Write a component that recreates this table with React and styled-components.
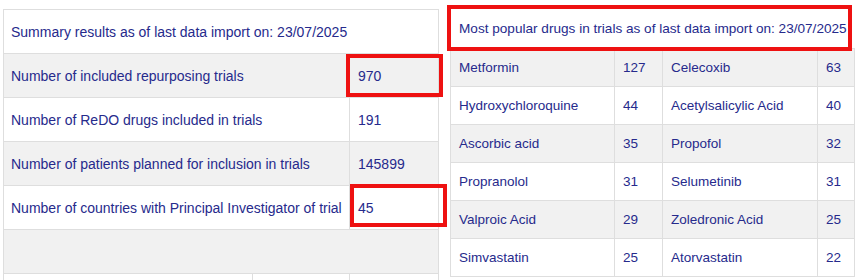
import React from 'react';
import styled, { createGlobalStyle } from 'styled-components';

const GlobalStyle = createGlobalStyle`
  body {
    margin: 0;
    background: #ffffff;
    font-family: "Liberation Sans", Arial, sans-serif;
  }
`;

const summary = [
  { label: 'Number of included repurposing trials', value: '970', mark: 'first' },
  { label: 'Number of ReDO drugs included in trials', value: '191' },
  { label: 'Number of patients planned for inclusion in trials', value: '145899' },
  { label: 'Number of countries with Principal Investigator of trial', value: '45', mark: 'second' },
];

const drugs = [
  ['Metformin', 127, 'Celecoxib', 63],
  ['Hydroxychloroquine', 44, 'Acetylsalicylic Acid', 40],
  ['Ascorbic acid', 35, 'Propofol', 32],
  ['Propranolol', 31, 'Selumetinib', 31],
  ['Valproic Acid', 29, 'Zoledronic Acid', 25],
  ['Simvastatin', 25, 'Atorvastatin', 22],
];

const App = () => (
  <>
    <GlobalStyle />
    <Page>
      <SummaryTable>
        <colgroup>
          <col style={{ width: 249 }} />
          <col style={{ width: 97 }} />
          <col />
        </colgroup>
        <tbody>
          <SummaryRow>
            <SummaryCell colSpan={3}>Summary results as of last data import on: 23/07/2025</SummaryCell>
          </SummaryRow>
          {summary.map((row, i) => (
            <SummaryRow key={row.label} shaded={i % 2 === 0}>
              <SummaryCell colSpan={2}>{row.label}</SummaryCell>
              <ValueCell>
                {row.value}
                {row.mark && <Highlight variant={row.mark} />}
              </ValueCell>
            </SummaryRow>
          ))}
          <SummaryRow shaded>
            <SummaryCell colSpan={3} />
          </SummaryRow>
          <SummaryRow>
            <TailCell />
            <TailCell />
            <TailCell />
          </SummaryRow>
        </tbody>
      </SummaryTable>

      <DrugPanel>
        <DrugCaption>Most popular drugs in trials as of last data import on: 23/07/2025</DrugCaption>
        <DrugTable>
          <colgroup>
            <col style={{ width: 164 }} />
            <col style={{ width: 48 }} />
            <col style={{ width: 155 }} />
            <col />
          </colgroup>
          <tbody>
            {drugs.map((d, i) => (
              <DrugRow key={d[0]} shaded={i % 2 === 0}>
                <DrugCell>{d[0]}</DrugCell>
                <DrugCell>{d[1]}</DrugCell>
                <DrugCell>{d[2]}</DrugCell>
                <DrugCell>{d[3]}</DrugCell>
              </DrugRow>
            ))}
          </tbody>
        </DrugTable>
      </DrugPanel>
    </Page>
  </>
);

const Page = styled.div`
  display: flex;
  align-items: flex-start;
  height: 280px;
  overflow: hidden;
`;

const SummaryTable = styled.table`
  margin: 9px 0 0 3px;
  width: 436px;
  border-collapse: collapse;
  table-layout: fixed;
  border: 1px solid #dedede;
  color: #262a8c;
  font-size: 14px;
`;

const SummaryRow = styled.tr.withConfig({ shouldForwardProp: p => p !== 'shaded' })`
  height: 44px;
  background: ${props => (props.shaded ? '#f1f1f1' : '#ffffff')};
`;

const SummaryCell = styled.td`
  padding: 0 8px 0 7px;
  border-top: 1px solid #dedede;
  border-bottom: 1px solid #dedede;
  white-space: nowrap;
  overflow: hidden;
`;

const ValueCell = styled.td`
  position: relative;
  padding: 0 8px;
  border: 1px solid #dedede;
`;

const TailCell = styled.td`
  border: 1px solid #dedede;
`;

const Highlight = styled.span`
  position: absolute;
  border: 4px solid #ee1111;
  pointer-events: none;
  left: ${props => (props.variant === 'first' ? '-4px' : '0px')};
  right: ${props => (props.variant === 'first' ? '-5px' : '-9px')};
  top: ${props => (props.variant === 'first' ? '0px' : '-2px')};
  bottom: ${props => (props.variant === 'first' ? '0px' : '2px')};
`;

const DrugPanel = styled.div`
  margin: 5px 0 0 8px;
  display: flex;
  flex-direction: column;
`;

const DrugCaption = styled.div`
  position: relative;
  z-index: 1;
  width: 405px;
  box-sizing: border-box;
  height: 46px;
  border: 4px solid #ee1111;
  padding: 0 0 0 8px;
  display: flex;
  align-items: center;
  color: #262a8c;
  font-size: 13.6px;
  white-space: nowrap;
`;

const DrugTable = styled.table`
  margin: -3px 0 0 3px;
  width: 405px;
  border-collapse: collapse;
  table-layout: fixed;
  border: 1px solid #dedede;
  color: #262a8c;
  font-size: 13.5px;
`;

const DrugRow = styled.tr.withConfig({ shouldForwardProp: p => p !== 'shaded' })`
  height: 38px;
  background: ${props => (props.shaded ? '#f1f1f1' : '#ffffff')};
`;

const DrugCell = styled.td`
  padding: 0 8px;
  border: 1px solid #dedede;
  white-space: nowrap;
  overflow: hidden;
`;

export default App;
